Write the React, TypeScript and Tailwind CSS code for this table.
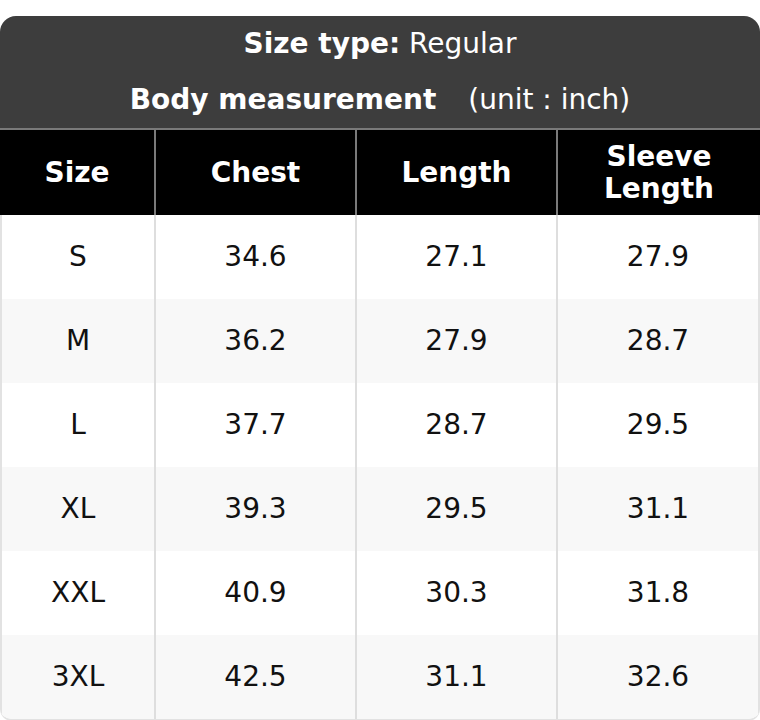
const rows = [
  { size: 'S', chest: '34.6', length: '27.1', sleeve: '27.9' },
  { size: 'M', chest: '36.2', length: '27.9', sleeve: '28.7' },
  { size: 'L', chest: '37.7', length: '28.7', sleeve: '29.5' },
  { size: 'XL', chest: '39.3', length: '29.5', sleeve: '31.1' },
  { size: 'XXL', chest: '40.9', length: '30.3', sleeve: '31.8' },
  { size: '3XL', chest: '42.5', length: '31.1', sleeve: '32.6' },
];

export default function App() {
  return (
    <div className="w-[760px] h-[720px] bg-white pt-4 font-['DejaVu_Sans',sans-serif] text-[28px]">
      <div className="overflow-hidden rounded-t-2xl rounded-b-xl border-b-2 border-[#e2e2e2]">
        {/* Title */}
        <div className="flex h-[112px] flex-col items-center justify-center bg-[#3d3d3d] leading-[56px] text-white">
          <p>
            <span className="font-bold">Size type:</span> Regular
          </p>
          <p>
            <span className="font-bold">Body measurement</span>
            <span className="ml-8">(unit : inch)</span>
          </p>
        </div>

        {/* Head */}
        <div className="grid grid-cols-[154px_201px_201px_1fr] border-t-2 border-[#7a7a7a] bg-black font-bold text-white">
          <div className="flex h-[85px] items-center justify-center">Size</div>
          <div className="flex items-center justify-center border-l-2 border-[#7a7a7a]">Chest</div>
          <div className="flex items-center justify-center border-l-2 border-[#7a7a7a]">Length</div>
          <div className="flex flex-col items-center justify-center border-l-2 border-[#7a7a7a] leading-8">
            <span>Sleeve</span>
            <span>Length</span>
          </div>
        </div>

        {/* Body */}
        <div className="border-x-2 border-[#e2e2e2]">
          {rows.map((r, i) => (
            <div
              key={r.size}
              className={`grid h-[84px] grid-cols-[152px_201px_201px_1fr] text-[#111] ${i % 2 ? 'bg-[#f8f8f8]' : 'bg-white'}`}
            >
              <div className="flex items-center justify-center">{r.size}</div>
              <div className="flex items-center justify-center border-l-2 border-[#dedede]">{r.chest}</div>
              <div className="flex items-center justify-center border-l-2 border-[#dedede]">{r.length}</div>
              <div className="flex items-center justify-center border-l-2 border-[#dedede]">{r.sleeve}</div>
            </div>
          ))}
        </div>
      </div>
    </div>
  );
}
